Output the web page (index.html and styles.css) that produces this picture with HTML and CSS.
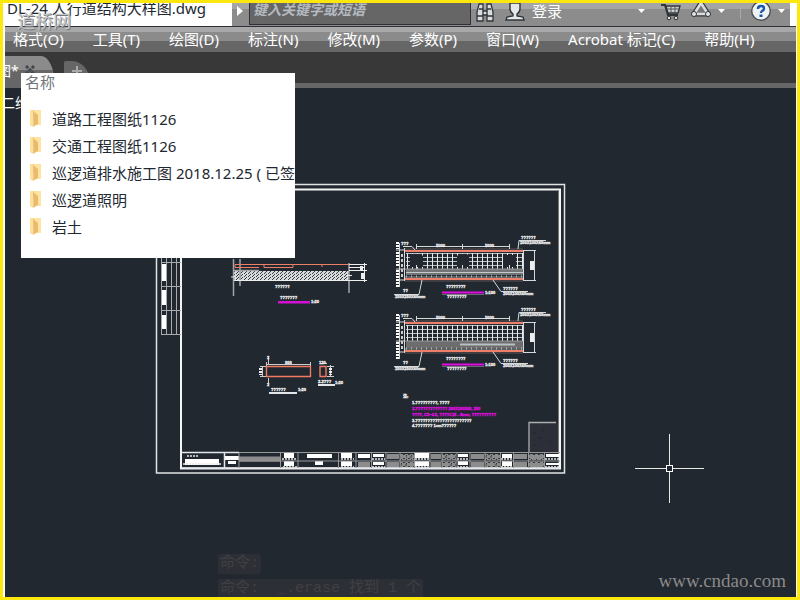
FILE: index.html
```
<!DOCTYPE html>
<html lang="zh-CN">
<head>
<meta charset="utf-8">
<title>DL-24 人行道结构大样图.dwg</title>
<link rel="stylesheet" href="styles.css">
</head>
<body>
<div class="app">
  <header class="titlebar">
    <div class="filename">DL-24 人行道结构大样图.dwg</div>
    <button class="expand" aria-label="展开"><svg width="6" height="10" viewBox="0 0 6 10"><path d="M0 0L6 5L0 10Z" fill="#fff"/></svg></button>
    <input class="search" type="text" placeholder="键入关键字或短语" aria-label="搜索">
    <div class="tools">
      <button class="tool" aria-label="查找"><svg width="20" height="20" viewBox="0 0 20 20"><g fill="#d9dde0" stroke="#30343a" stroke-width="1.3"><path d="M4 1H8V8H12V1H16L18 9V18H12V12H8V18H2V9Z"/><path d="M2 13H8M12 13H18M8 8V12M12 8V12M4 6H8M12 6H16"/></g></svg></button>
      <button class="signin"><svg width="20" height="20" viewBox="0 0 20 20"><path d="M5 0H15V6Q15 9 12 11V13L18 14L19 17H1L2 14L8 13V11Q5 9 5 6Z" fill="#e5e8e9" stroke="#30343a" stroke-width="1.4"/></svg><span>登录</span></button>
      <button class="caret" aria-label="登录选项"></button>
      <button class="tool" aria-label="商店"><svg width="20" height="20" viewBox="0 0 20 20"><path d="M0 2H4L7 12H17" fill="none" stroke="#30343a" stroke-width="2"/><path d="M5 3H19L17 10H7Z" fill="#c9cdd0" stroke="#30343a" stroke-width="1.3"/><path d="M6 6H18M10 3V10M14 3V10" stroke="#555a60"/><circle cx="8" cy="15" r="1.8" fill="#ddd" stroke="#30343a"/><circle cx="15" cy="15" r="1.8" fill="#ddd" stroke="#30343a"/></svg></button>
      <button class="tool" aria-label="应用程序"><svg width="20" height="20" viewBox="0 0 20 20"><path d="M10 0L17 11H3Z" fill="none" stroke="#30343a" stroke-width="5" stroke-linejoin="round"/><path d="M10 0L17 11H3Z" fill="#777" stroke="#d9dde0" stroke-width="2.6" stroke-linejoin="round"/><g fill="#e5e8e9" stroke="#30343a"><circle cx="3" cy="11" r="2.5"/><circle cx="17" cy="11" r="2.5"/></g></svg></button>
      <button class="caret" aria-label="应用程序选项"></button>
      <span class="divider"></span>
      <button class="tool" aria-label="帮助"><svg width="20" height="20" viewBox="0 0 20 20"><circle cx="10" cy="8" r="9.3" fill="#eef2f4" stroke="#4a4e54" stroke-width="1.4"/><path d="M7 6Q7 3 10 3Q13 3 13 5.500Q13 7 11 8Q10 9 10 10" fill="none" stroke="#1756a8" stroke-width="2.4"/><rect x="8.500" y="11.500" width="3" height="2.500" fill="#1756a8"/></svg></button>
      <button class="caret" aria-label="帮助选项"></button>
    </div>
  </header>
  <nav class="menubar">
    <button>格式(O)</button><button>工具(T)</button><button>绘图(D)</button><button>标注(N)</button><button>修改(M)</button><button>参数(P)</button><button>窗口(W)</button><button>Acrobat 标记(C)</button><button>帮助(H)</button>
  </nav>
  <div class="tabs">
    <button class="tab"><span>图*</span><svg width="10" height="10" viewBox="0 0 10 10"><path d="M1 1L9 9M9 1L1 9" stroke="#44474b" stroke-width="3" stroke-dasharray="3 1"/></svg></button>
    <button class="newtab" aria-label="新建"><svg width="10" height="10" viewBox="0 0 10 10"><path d="M5 0V10M0 5H10" stroke="#aaa" stroke-width="2"/></svg></button>
  </div>
  <main class="canvas">
    <svg class="drawing" viewBox="5 88 791 509">
      <defs>
        <pattern id="speckle" width="4" height="3" patternUnits="userSpaceOnUse"><rect width="4" height="3" fill="#d8dadb"/><path d="M0 .5H1M2 1.500H3M1 2.500H2" stroke="#343a40"/></pattern>
        <pattern id="gridfill" width="5" height="4" patternUnits="userSpaceOnUse"><path d="M0 1.500H5" stroke="#b9bdc0"/><path d="M2.500 0V4" stroke="#e6e8e9"/></pattern>
        <pattern id="noise" width="5" height="4" patternUnits="userSpaceOnUse"><rect width="5" height="4" fill="#8b8b8b"/><path d="M0 1H2M3 2.500H5M1 3.500H2" stroke="#343a40"/></pattern>
        <g id="plan">
          <path d="M405 277H523M405 269H523" stroke="#999"/>
          <path d="M405 251H523M405 279H523" stroke="#ec7f67" stroke-width="2"/>
          <path d="M405 249H523M405 281H523" stroke="#8a7470" stroke-width=".6"/>
          <path d="M404.500 248V281M399.500 243V287M396 250H405M396 269H405M396 280H405M416 246.500H510M416.500 244V249M462.500 244V249M509.500 244V249M523.500 250V281M534.500 250V281M523 250.500H536M523 280.500H536M518 249L519 240.500H546M403 246.500H412L415 250M422 280L419 294.500H394M493 280L501 291.500H528" fill="none" stroke="#d5d7d8"/>
          <rect x="530" y="261" width="4" height="9" fill="#eee"/>
          <path d="M397.500 242V249M397.500 252V266M397.500 270V288" stroke="#fff" stroke-width="3" stroke-dasharray="2 1"/>
          <path d="M402 254V278" stroke="#ccc" stroke-width="2" stroke-dasharray="3 2"/>
          <path d="M442 292.500H484" stroke="#e20be2" stroke-width="2"/>
          <path d="M442 294.500H484" stroke="#999" stroke-width=".6"/>
        </g>
      </defs>
      <g fill="none" stroke="#e2e4e2">
        <rect x="156.500" y="184.500" width="408" height="288.500" stroke-width="1.500"/>
        <rect x="181" y="189.500" width="379" height="279" stroke="#f4f4f4" stroke-width="2"/>
        <path d="M558.500 190V467" stroke="#777"/>
        <path d="M161.500 200V335M166.500 200V335M171.500 200V335M176.500 200V335M161 262.500H181M161 286.500H181M161 310.500H181M161 334.500H181" stroke="#a8acb0"/>
      </g>
      <path d="M164 264V281M164 290V305M164 315V329" stroke="#fff" stroke-width="4"/>

      <rect x="234" y="271" width="115" height="9" fill="url(#speckle)"/>
      <path d="M233.500 259V296M240 259V286M349 263V293M234 270.500H259" stroke="#a2a5a8" stroke-width="1.500"/>
      <path d="M234 280.500H367M349 264.500H367M349 267.500H364M349 270.500H367M364.500 263V282M231 277H236M347 275.500H352" stroke="#eee" fill="none"/>
      <path d="M361.500 266V271M362.500 273V279" stroke="#eee" stroke-width="3"/>
      <path d="M349 264.500H235V267.500H259M264 265V267.500H293V265M322 264V267" stroke="#ec7f67" fill="none"/>
      <rect x="278" y="301" width="32" height="2.500" fill="#d510d5"/>

      <rect x="406" y="253" width="117" height="16" fill="url(#gridfill)"/>
      <path d="M410 256L412 254H421L423 256V267H410ZM457 256L459 254H467L469 256V267H457ZM503 257L505 255H514L516 257V267H503Z" fill="#212830"/>
      <path d="M416.500 265V270M462.500 265V270M509.500 265V270" stroke="#ddd"/>
      <rect x="406" y="269" width="117" height="6" fill="#737476"/>
      <path d="M406 272.500H523" stroke="#c3cbd1"/>
      <path d="M406 276.500H523" stroke="#ccc" stroke-width="2" stroke-dasharray="1 4"/>
      <use href="#plan"/>
      <rect x="406" y="325" width="117" height="16" fill="url(#gridfill)"/>
      <rect x="406" y="341" width="117" height="7" fill="#6d6d6d"/>
      <path d="M460 344.500H515" stroke="#b9c0c6" stroke-width="2"/>
      <path d="M406 348.500H523" stroke="#ccc" stroke-width="2" stroke-dasharray="1 4"/>
      <use href="#plan" y="72"/>

      <g fill="none" stroke="#ccc">
        <path d="M266 364.500H311M262.500 366V377M260 366.500H266M260 376.500H266M268.500 356V364M268.500 378V385M266.500 362V367M310.500 362V367M320 363.500H327M330.500 365V377M327 366.500H334M327 376.500H334"/>
        <path d="M260.500 368V375M330.500 368V375" stroke="#eee" stroke-width="3" stroke-dasharray="2 1"/>
      </g>
      <path d="M266.500 366.500H310.500V376.500H266.500ZM320 366.500H326V376.500H320Z" fill="none" stroke="#f07b62" stroke-width="1.400"/>
      <path d="M269 393H297M318 385H335" stroke="#e2e6e8" stroke-width="2"/>

      <g class="note">
        <text x="275" y="288">??????</text><text x="280" y="299">???????</text><text x="311" y="303">1:20</text>
        <text x="436" y="247">5000</text><text x="485" y="247">5000</text><text x="401" y="245">???</text>
        <text x="521" y="239">??????</text><text x="520" y="244">200X100X60mm</text>
        <text x="403" y="292">??</text><text x="395" y="298">250X250X60mm</text><text x="446" y="288">????????</text><text x="447" y="298">????????</text><text x="485" y="294">1:100</text><text x="503" y="290">??????</text><text x="503" y="295">200X100X60mm</text>
        <text x="436" y="319">5000</text><text x="485" y="319">5000</text><text x="401" y="317">???</text>
        <text x="521" y="311">??????</text><text x="520" y="316">200X100X60mm</text>
        <text x="403" y="364">??</text><text x="395" y="370">250X250X60mm</text><text x="446" y="360">????????</text><text x="447" y="370">????????</text><text x="485" y="366">1:100</text><text x="503" y="362">??????</text><text x="503" y="367">200X100X60mm</text>
        <text x="285" y="364">900</text><text x="319" y="364">120</text><text x="267" y="359">2</text><text x="267" y="386">2</text>
        <text x="271" y="391">??????</text><text x="298" y="391">1:20</text><text x="318" y="383">2-2???</text><text x="335" y="384">1:20</text>
        <text x="403" y="398">注:</text>
        <text x="412" y="404">1.?????????, ????</text>
        <text class="pink" x="412" y="410">2.????????????? 200X100X60, 250</text>
        <text class="pink" x="412" y="416">????, C5~4.5, ????C15 - 8mm, ??????????</text>
        <text x="412" y="422">3.???????????????????????</text>
        <text x="412" y="427">4.??????? 1cm??????</text>
      </g>

      <rect x="529" y="422.500" width="29" height="30" fill="#2c2f37"/>
      <path d="M529 452V422.500H556" fill="none" stroke="#aaaead" stroke-width="1.300"/>
      <path d="M533 433H536M542 430H544M538 438H541M549 442H551M534 445H536M551 432H553" stroke="#20252b"/>

      <g fill="#8c8c8c">
        <rect x="239" y="456.500" width="41" height="5"/>
        <rect x="387" y="454" width="12" height="5"/><rect x="387" y="462" width="12" height="5"/>
        <rect x="431" y="454" width="10" height="5"/><rect x="431" y="462" width="10" height="5"/>
        <rect x="471" y="454" width="13" height="5"/><rect x="471" y="462" width="13" height="5"/>
        <rect x="514" y="454" width="13" height="5"/><rect x="514" y="462" width="13" height="5"/>
        <rect x="358" y="462" width="12" height="5"/>
      </g>
      <path d="M400 457H414M442 457H456M485 457H500M529 457H544M400 464.500H414M442 464.500H456M485 464.500H500M529 464.500H544" stroke="url(#noise)" stroke-width="6"/>
      <g fill="#8c8c8c"><rect x="401" y="455" width="5" height="3"/><rect x="408" y="463" width="5" height="3"/><rect x="443" y="463" width="6" height="3"/><rect x="449" y="455" width="6" height="3"/><rect x="487" y="463" width="5" height="3"/><rect x="493" y="455" width="5" height="3"/><rect x="530" y="455" width="12" height="4"/><rect x="530" y="463" width="12" height="4"/></g>
      <g fill="#fff">
        <rect x="185" y="459" width="34" height="6"/><rect x="225" y="456" width="14" height="4"/><rect x="228" y="461" width="8" height="3"/>
        <rect x="284" y="453" width="10" height="5"/><rect x="284" y="461" width="10" height="5"/><rect x="307" y="454" width="25" height="4"/><rect x="315" y="461" width="8" height="4"/>
        <rect x="341" y="453" width="11" height="5"/><rect x="341" y="461" width="11" height="5"/><rect x="358" y="454" width="12" height="4"/>
        <rect x="373" y="454" width="11" height="3"/><rect x="373" y="462" width="11" height="3"/><rect x="415" y="453" width="14" height="5"/><rect x="415" y="461" width="14" height="5"/>
        <rect x="458" y="454" width="10" height="3"/><rect x="458" y="461" width="10" height="4"/><rect x="502" y="454" width="10" height="4"/><rect x="502" y="461" width="10" height="5"/><rect x="546" y="454" width="13" height="3"/><rect x="546" y="463" width="13" height="2"/>
      </g>
      <path d="M187 456H198M183 464H221M282 459H297M283 467H297M341 459H354M341 467H354M372 459H385M372 467H385M415 459H429M415 467H429M457 459H469M457 467H469M501 459H513M501 467H513M545 459H559M545 467H559" stroke="#e8e8e8" stroke-width="1.500" stroke-dasharray="2 1"/>
      <path d="M182 452.500H239M224.500 453V468M182 468H560" stroke="#e4e6ea" stroke-width="1.500"/>
      <path d="M239 452.500H560M239 461H560M239 453V468M280.500 453V468M298 453V468M338.500 453V468M356 453V468M371.500 453V468M386 453V468M400 453V468M414.500 453V468M430 453V468M442 453V468M457 453V468M470 453V468M485 453V468M500.500 453V468M513.500 453V468M528.500 453V468M544.500 453V468" fill="none" stroke="#989898"/>

      <path d="M635 468.500H666M673 468.500H704M669.500 434V465M669.500 472V503" stroke="#e8e8e2"/>
      <rect x="666.500" y="465.500" width="6" height="6" fill="none" stroke="#fff"/>
    </svg>
    <div class="viewlabel">二维线框</div>
    <div class="history"><div>命令:</div><div>命令:&nbsp; _.erase 找到 1 个</div></div>
    <div class="site">www.cndao.com</div>
  </main>
  <section class="panel">
    <h2>名称</h2>
    <ul>
      <li><button><svg width="12" height="17" viewBox="0 0 12 17"><path d="M0 0H8V12L4 17L0 15Z" fill="#f5cf85"/><path d="M4 0H11V15H4Z" fill="#ffe3a1"/><path d="M3 1L8 5V14L4 16Z" fill="#e8bb70"/><path d="M0 0H3V15H0Z" fill="#ffe09a"/></svg>道路工程图纸1126</button></li>
      <li><button><svg width="12" height="17" viewBox="0 0 12 17"><path d="M0 0H8V12L4 17L0 15Z" fill="#f5cf85"/><path d="M4 0H11V15H4Z" fill="#ffe3a1"/><path d="M3 1L8 5V14L4 16Z" fill="#e8bb70"/><path d="M0 0H3V15H0Z" fill="#ffe09a"/></svg>交通工程图纸1126</button></li>
      <li><button><svg width="12" height="17" viewBox="0 0 12 17"><path d="M0 0H8V12L4 17L0 15Z" fill="#f5cf85"/><path d="M4 0H11V15H4Z" fill="#ffe3a1"/><path d="M3 1L8 5V14L4 16Z" fill="#e8bb70"/><path d="M0 0H3V15H0Z" fill="#ffe09a"/></svg>巡逻道排水施工图 2018.12.25 ( 已签</button></li>
      <li><button><svg width="12" height="17" viewBox="0 0 12 17"><path d="M0 0H8V12L4 17L0 15Z" fill="#f5cf85"/><path d="M4 0H11V15H4Z" fill="#ffe3a1"/><path d="M3 1L8 5V14L4 16Z" fill="#e8bb70"/><path d="M0 0H3V15H0Z" fill="#ffe09a"/></svg>巡逻道照明</button></li>
      <li><button><svg width="12" height="17" viewBox="0 0 12 17"><path d="M0 0H8V12L4 17L0 15Z" fill="#f5cf85"/><path d="M4 0H11V15H4Z" fill="#ffe3a1"/><path d="M3 1L8 5V14L4 16Z" fill="#e8bb70"/><path d="M0 0H3V15H0Z" fill="#ffe09a"/></svg>岩土</button></li>
    </ul>
  </section>
  <div class="brand">道桥网</div>
</div>
</body>
</html>
```
FILE: styles.css
```
* { box-sizing: border-box; }
body { margin: 0; background: #fde80d; font: 15px/20px "Noto Sans", "Noto Sans CJK SC", sans-serif; }
button { border: 0; padding: 0; background: none; color: inherit; font: inherit; white-space: nowrap; }
svg { display: block; flex: none; }
.app {
  position: relative; display: flex; flex-direction: column; min-height: 100vh; overflow: hidden;
  border: 3px solid #fde80d; padding: 0 1px 0 2px; background: #fff;
}
.titlebar {
  display: flex; height: 24px; overflow: hidden; border-bottom: 1px solid #303038;
  background: linear-gradient(#a5a5a5 6px, #8c8c8c 6px);
}
.filename { flex: none; width: 227px; padding-left: 2px; background: #fff; color: #222831; line-height: 10px; overflow: hidden; white-space: nowrap; }
.expand { display: flex; flex: none; width: 17px; padding: 3px 5px; }
.search {
  flex: 1; min-width: 60px; height: 22px; padding: 0 3px 8px; border: 1px solid #303038; border-top: 0;
  background: #666; color: #fff; font: italic 600 14px/14px "Noto Sans", "Noto Sans CJK SC", sans-serif;
}
.search::placeholder { color: #b4bac0; opacity: 1; }
.tools { display: flex; flex: none; border-right: 6px solid #fff; }
.tool, .signin { display: flex; align-items: flex-start; margin-left: 10px; height: 20px; overflow: hidden; color: #fff; }
.tool:first-child { margin-left: 4px; }
.signin { width: 120px; gap: 7px; }
.signin span { line-height: 17px; }
.caret { width: 7px; height: 4px; margin: 6px 6px 0 13px; background: #fff; clip-path: polygon(0 0, 100% 0, 50% 100%); }
.tool + .caret { margin-left: 7px; margin-right: 5px; }
.divider { width: 1px; height: 14px; margin: 2px 0 0 10px; background: #aaa; }
.menubar {
  display: flex; align-items: flex-start; gap: 29px; height: 25px; padding: 2px 0 0 8px; color: #fff; overflow: hidden;
  background: linear-gradient(#a8a8a8 5px, #8b8b8b 5px 14px, #666 14px);
}
.tabs { display: flex; gap: 9px; height: 36px; border-bottom: 5px solid #666; background: #383838; }
.tab {
  display: flex; gap: 6px; width: 50px; height: 36px; margin-top: 4px; padding: 5px 0; overflow: hidden; color: #fff;
  background: linear-gradient(#8b8b8b 14px, #666 14px); border-top-right-radius: 14px 30px; text-indent: -8px; font-size: 14px;
}
.tab svg { margin-top: 4px; }
.newtab { display: flex; align-items: flex-start; width: 25px; height: 22px; margin-top: 9px; padding: 5px 8px 0; background: #666; border-radius: 2px 18px 0 0; }
.canvas { position: relative; flex: 1; background: #212830; overflow: hidden; }
.drawing { width: 100%; height: auto; }
.note { fill: #f0f0f0; stroke: #f0f0f0; stroke-width: .3px; font: bold 4px/4px "Liberation Sans", "Noto Sans CJK SC", sans-serif; }
.pink { fill: #e20be2; stroke: #e20be2; }
.viewlabel { position: absolute; top: 5px; left: -4px; color: #fff; font-size: 14px; }
.history { position: absolute; left: 213px; bottom: -2px; color: #403f42; font: 15px/20px "Liberation Mono", "Noto Sans CJK SC", monospace; }
.history div { width: fit-content; margin-top: 5px; padding: 0 2px; border-radius: 2px; background: #2d2f37; white-space: pre; }
.site { position: absolute; right: 10px; bottom: 4px; color: #8c8a8a; font: 19px/24px "Liberation Serif", serif; }
.panel { position: absolute; top: 70px; left: 18px; width: 274px; padding: 0 0 18px 4px; overflow: hidden; background: #fff; color: #222831; }
.panel h2 { margin: 0 0 13px; font-size: 15px; line-height: 19px; font-weight: 400; color: #70757c; }
.panel ul { margin: 0; padding: 0; list-style: none; }
.panel button { display: flex; align-items: center; gap: 10px; height: 27px; padding-left: 5px; }
.brand { position: absolute; top: 7px; left: 14px; color: #c4c6c8; font: 18px/20px "Noto Sans CJK SC", sans-serif; text-shadow: 1px 1px 0 #777b80; }
```
